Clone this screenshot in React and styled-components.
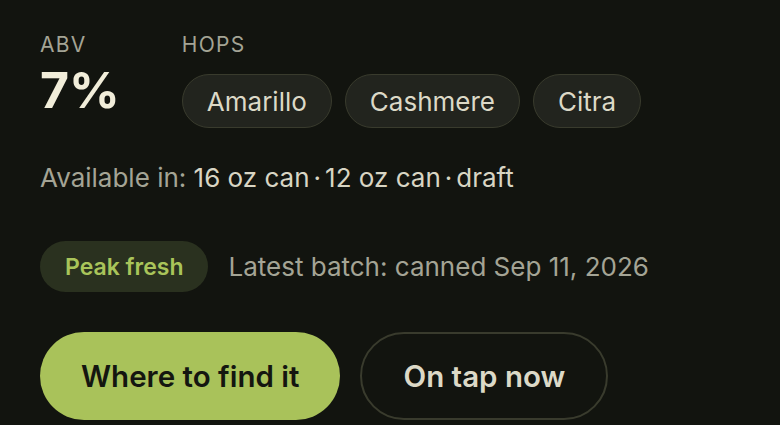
import React from "react";
import styled, { createGlobalStyle } from "styled-components";

const Global = createGlobalStyle`
  html, body { margin: 0; padding: 0; background: #12140f; }
  body { font-family: Inter, "Noto Sans", sans-serif; -webkit-font-smoothing: antialiased; }
`;

const Page = styled.div`
  width: 780px;
  height: 425px;
  box-sizing: border-box;
  padding: 35px 40px 0;
  background: #12140f;
  display: flex;
  flex-direction: column;
  overflow: hidden;
`;

const StatsRow = styled.div`
  display: flex;
  gap: 62px;
`;

const Stat = styled.div`
  display: flex;
  flex-direction: column;
  gap: ${(p) => p.$gap || 14}px;
`;

const Label = styled.div`
  font-size: 21px;
  line-height: 20px;
  letter-spacing: 0.06em;
  color: #a4a495;
  text-transform: uppercase;
`;

const BigValue = styled.div`
  font-size: 50px;
  line-height: 52px;
  font-weight: 700;
  color: #f1edd9;
`;

const Chips = styled.div`
  display: flex;
  gap: 13px;
`;

const Chip = styled.span`
  display: inline-flex;
  align-items: center;
  height: 54px;
  box-sizing: border-box;
  padding: 0 24px;
  border-radius: 27px;
  background: #22241e;
  border: 1.5px solid #393b2d;
  color: #dcd9c7;
  font-size: 26px;
`;

const Availability = styled.p`
  margin: 35px 0 0;
  font-size: 26px;
  line-height: 30px;
  color: #d8d5c3;
`;

const Muted = styled.span`
  color: #a4a495;
`;

const Dot = styled.span`
  margin: 0 4px;
`;

const BatchRow = styled.div`
  display: flex;
  align-items: center;
  gap: 20px;
  margin-top: 48px;
`;

const Badge = styled.span`
  display: inline-flex;
  align-items: center;
  height: 51px;
  padding: 0 25px;
  border-radius: 26px;
  background: #2a311f;
  color: #a9c45a;
  font-size: 23px;
  font-weight: 600;
`;

const BatchText = styled.span`
  font-size: 26px;
  color: #a4a495;
`;

const Actions = styled.div`
  display: flex;
  gap: 20px;
  margin-top: 40px;
`;

const Button = styled.button`
  height: 88px;
  box-sizing: border-box;
  padding: 0 41px;
  border-radius: 44px;
  font-family: inherit;
  font-size: 29.5px;
  font-weight: 600;
  cursor: pointer;
  background: ${(p) => (p.$primary ? "#a9c25a" : "transparent")};
  color: ${(p) => (p.$primary ? "#141610" : "#dcd9c7")};
  border: ${(p) => (p.$primary ? "none" : "2px solid #393b2d")};
`;

export default function App() {
  const hops = ["Amarillo", "Cashmere", "Citra"];
  const formats = ["16 oz can", "12 oz can", "draft"];
  return (
    <>
      <Global />
      <Page>
        <StatsRow>
          <Stat $gap={9}>
            <Label>ABV</Label>
            <BigValue>7%</BigValue>
          </Stat>
          <Stat $gap={19}>
            <Label>Hops</Label>
            <Chips>
              {hops.map((h) => (
                <Chip key={h}>{h}</Chip>
              ))}
            </Chips>
          </Stat>
        </StatsRow>
        <Availability>
          <Muted>Available in: </Muted>
          {formats.map((f, i) => (
            <React.Fragment key={f}>
              {i > 0 && <Dot>·</Dot>}
              {f}
            </React.Fragment>
          ))}
        </Availability>
        <BatchRow>
          <Badge>Peak fresh</Badge>
          <BatchText>Latest batch: canned Sep 11, 2026</BatchText>
        </BatchRow>
        <Actions>
          <Button $primary>Where to find it</Button>
          <Button>On tap now</Button>
        </Actions>
      </Page>
    </>
  );
}
